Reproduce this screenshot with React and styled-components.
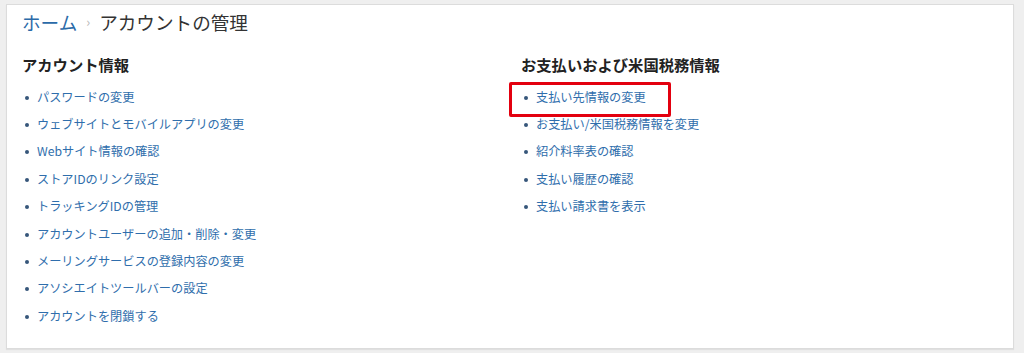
import React from 'react';
import styled, { createGlobalStyle } from 'styled-components';

const GlobalStyle = createGlobalStyle`
  html, body {
    margin: 0;
    padding: 0;
    background: #efefef;
    font-family: "Noto Sans CJK JP", "Noto Sans", sans-serif;
  }
`;

const Page = styled.div`
  padding: 4px 10px 4px 6px;
  height: 353px;
  box-sizing: border-box;
`;

const Card = styled.div`
  background: #fff;
  border: 1px solid #dcdcdc;
  box-shadow: 0 1px 1px rgba(0, 0, 0, 0.06);
  height: 345px;
  box-sizing: border-box;
  padding: 2px 15px 0 15px;
`;

const Breadcrumb = styled.div`
  display: flex;
  align-items: center;
  gap: 9px;
  font-size: 18.6px;
  line-height: 30px;
`;

const Crumb = styled.a`
  color: #2b6aa8;
  text-decoration: none;
`;

const Sep = styled.span`
  color: #b8b8b8;
  font-size: 13px;
`;

const Current = styled.span`
  color: #333;
`;

const Columns = styled.div`
  display: grid;
  grid-template-columns: 499px 1fr;
  margin-top: 16px;
`;

const Heading = styled.h3`
  margin: 0 0 8px 0;
  font-size: 15.3px;
  font-weight: 700;
  color: #222;
  line-height: 22px;
`;

const List = styled.ul`
  list-style: none;
  margin: 0;
  padding: 0;
`;

const Item = styled.li`
  position: relative;
  height: 27.4px;
  display: flex;
  align-items: center;
  padding-left: 15px;
  width: fit-content;

  &::before {
    content: '';
    position: absolute;
    left: 3px;
    top: 50%;
    width: 4px;
    height: 4px;
    margin-top: -1px;
    border-radius: 50%;
    background: #36567a;
  }
`;

const Link = styled.a`
  color: #2f6eac;
  font-size: 12.2px;
  text-decoration: none;
`;

const Highlight = styled.div`
  position: absolute;
  left: -12px;
  top: -1px;
  width: 162px;
  height: 35px;
  border: 3px solid #e3000f;
  border-radius: 2px;
  box-sizing: border-box;
  pointer-events: none;
`;

const accountLinks = [
  'パスワードの変更',
  'ウェブサイトとモバイルアプリの変更',
  'Webサイト情報の確認',
  'ストアIDのリンク設定',
  'トラッキングIDの管理',
  'アカウントユーザーの追加・削除・変更',
  'メーリングサービスの登録内容の変更',
  'アソシエイトツールバーの設定',
  'アカウントを閉鎖する',
];

const paymentLinks = [
  '支払い先情報の変更',
  'お支払い/米国税務情報を変更',
  '紹介料率表の確認',
  '支払い履歴の確認',
  '支払い請求書を表示',
];

export default function App() {
  return (
    <>
      <GlobalStyle />
      <Page>
        <Card>
          <Breadcrumb>
            <Crumb href="#">ホーム</Crumb>
            <Sep>›</Sep>
            <Current>アカウントの管理</Current>
          </Breadcrumb>
          <Columns>
            <div>
              <Heading>アカウント情報</Heading>
              <List>
                {accountLinks.map((t) => (
                  <Item key={t}>
                    <Link href="#">{t}</Link>
                  </Item>
                ))}
              </List>
            </div>
            <div>
              <Heading>お支払いおよび米国税務情報</Heading>
              <List>
                {paymentLinks.map((t, i) => (
                  <Item key={t}>
                    {i === 0 && <Highlight />}
                    <Link href="#">{t}</Link>
                  </Item>
                ))}
              </List>
            </div>
          </Columns>
        </Card>
      </Page>
    </>
  );
}
